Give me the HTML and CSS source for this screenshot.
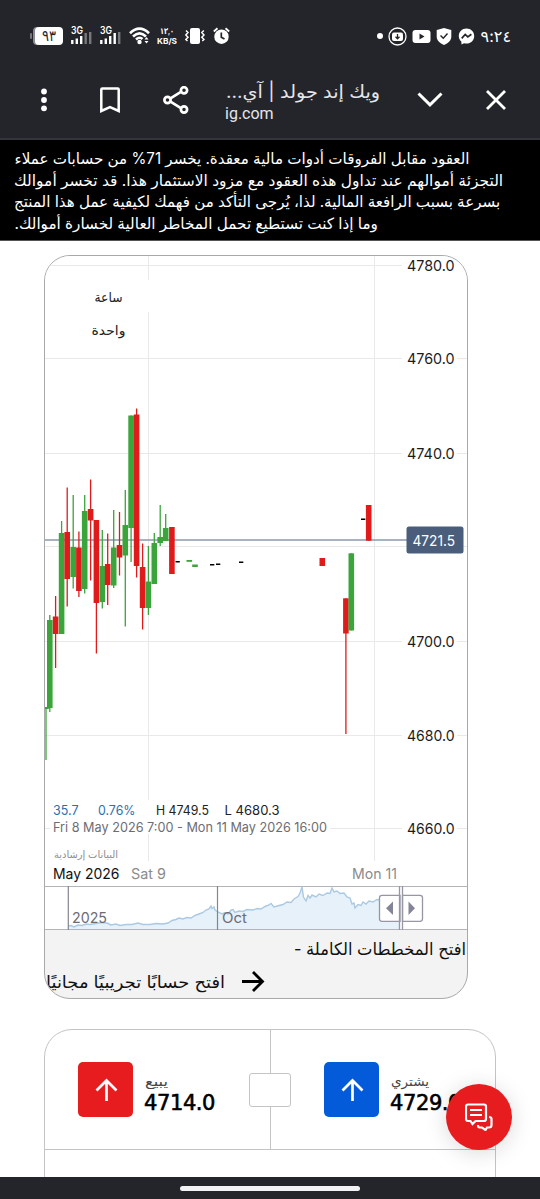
FILE: index.html
```
<!DOCTYPE html>
<html lang="ar">

<head>
    <meta charset="UTF-8">
    <meta name="viewport" content="width=device-width, initial-scale=1.0">
    <title>ويك إند جولد | آي جي</title>
    <link rel="stylesheet" href="styles.css">
</head>

<body>
    <header>
        <div class="status">
            <div class="status-left">
                <svg class="battery" width="34" height="18" viewBox="0 0 34 18">
                    <rect x="0" y="6" width="2" height="6" rx="1" fill="#77787c" />
                    <rect x="3" y="0" width="12" height="18" rx="4" fill="#8b8c90" />
                    <rect x="5" y="0" width="28" height="18" rx="4" fill="#fff" />
                    <text x="19" y="14" text-anchor="middle" textLength="14" lengthAdjust="spacingAndGlyphs" class="battery-text">٩٣</text>
                </svg>
                <svg class="signal" width="22" height="20" viewBox="0 0 22 20">
                    <text x="0" y="8" textLength="12" lengthAdjust="spacingAndGlyphs">3G</text>
                    <path d="M1.3 14v4M5.800 12.500v5.500M10.200 10v8" stroke="#fff" />
                    <path d="M14.700 7v11M19.200 6v12" stroke="#77787c" />
                </svg>
                <svg class="signal" width="22" height="20" viewBox="0 0 22 20">
                    <text x="0" y="8" textLength="12" lengthAdjust="spacingAndGlyphs">3G</text>
                    <path d="M1.300 14v4M5.800 12.500v5.500M10.200 10v8M14.700 7v11" stroke="#fff" />
                    <path d="M19.200 6v12" stroke="#77787c" />
                </svg>
                <svg class="wifi" width="22" height="18" viewBox="0 0 22 18" fill="none" stroke="#fff" stroke-width="2.600">
                    <path d="M1 6.200Q10.500-3 20 6.200M4 9.500Q10.500 3.300 17 9.500M7 12.500Q10.500 9.300 13.500 12" />
                    <circle cx="10.500" cy="15" r="2.200" fill="#fff" stroke="none" />
                    <path d="M15.500 12.500l2-2.500 2 2.500zM15.500 14l2 2.500 2-2.500z" fill="#fff" stroke="none" />
                </svg>
                <svg class="speed" width="20" height="18" viewBox="0 0 20 18">
                    <text x="3" y="7" textLength="14" lengthAdjust="spacingAndGlyphs">١٣,٠</text>
                    <text x="0" y="16.500" class="unit" textLength="20" lengthAdjust="spacingAndGlyphs">KB/S</text>
                </svg>
                <svg class="vibrate" width="20" height="18" viewBox="0 0 20 18">
                    <rect x="5" y="1" width="10" height="16" rx="2" fill="#fff" />
                    <path d="M1 3.500l2 2-2.200 2.500L3 10.200.8 12.500 2.500 14M18.800 3.500l-2 2 2.200 2.500-2.200 2.200 2.200 2.300-1.700 1.500" fill="none" stroke="#fff" stroke-width="1.500" />
                </svg>
                <svg class="alarm" width="17" height="18" viewBox="0 0 17 18">
                    <circle cx="8.500" cy="9.700" r="7.200" fill="#fff" />
                    <path d="M.8 4.500l3.700-3.200M16.200 4.500l-3.700-3.200" stroke="#fff" stroke-width="1.800" />
                    <path d="M8.300 5.500v4.800l3.200 1.800" fill="none" stroke="#24252b" stroke-width="1.700" />
                </svg>
            </div>
            <div class="status-right">
                <i class="dot"></i>
                <svg width="19" height="19" viewBox="0 0 19 19">
                    <circle cx="9.500" cy="9.500" r="8.500" fill="none" stroke="#fff" stroke-width="1.300" />
                    <rect x="4" y="5.500" width="11" height="8.500" rx="2" fill="#fff" />
                    <path d="M9.500 7v4M7.500 9.800l2 2 2-2" fill="none" stroke="#24252b" stroke-width="1.300" />
                </svg>
                <svg width="19" height="19" viewBox="0 0 19 19">
                    <rect x="0.500" y="3" width="18" height="13" rx="3" fill="#fff" />
                    <path d="M7.500 6.500v6l5-3z" fill="#24252b" />
                </svg>
                <svg width="16" height="19" viewBox="0 0 16 19">
                    <path d="M8 1l7.300 2v6.500c0 4-3 6.500-7.300 8.500C3.700 16 .7 13.500.7 9.500V3z" fill="#fff" />
                    <path d="M4.500 8.500l2.800 2.700 4.200-4.700" fill="none" stroke="#24252b" stroke-width="1.400" />
                </svg>
                <svg class="messenger" width="17" height="19" viewBox="0 0 17 19">
                    <path d="M8.500 1.500C4 1.500.8 4.700.8 9c0 2.300 1 4.200 2.500 5.500l.2 3 2.500-1.200c.8.200 1.600.3 2.500.3 4.500 0 7.700-3.300 7.700-7.600S13 1.500 8.500 1.500z" fill="#fff" />
                    <path d="M3.700 11.300l3.500-3.800 2.600 2.400 3.600-2.600" fill="none" stroke="#24252b" stroke-width="1.700" />
                </svg>
                <span class="clock">٩:٢٤</span>
            </div>
        </div>
        <nav class="toolbar">
            <svg class="more" width="8" height="24" viewBox="0 0 8 24" fill="#fff">
                <circle cx="4" cy="3.500" r="2.900" /><circle cx="4" cy="12" r="2.900" /><circle cx="4" cy="20.300" r="2.900" />
            </svg>
            <svg class="bookmark" width="20" height="26" viewBox="0 0 20 26">
                <path d="M1.300 24V2.500q0-1 1-1h15.400q1 0 1 1V24L10 20.200z" fill="none" stroke="#fff" stroke-width="2.500" />
            </svg>
            <svg class="share" width="26" height="28" viewBox="0 0 26 28" fill="none" stroke="#fff" stroke-width="2.700">
                <path d="M7.500 12.300L17.500 6.200M7.500 15.700l10 6.200" />
                <circle cx="4.500" cy="14" r="3.100" /><circle cx="21" cy="4.300" r="3.100" /><circle cx="21" cy="23.500" r="3.100" />
            </svg>
            <div class="page-title">
                <svg width="156" height="28" viewBox="0 0 156 28">
                    <text x="155" y="19" direction="rtl" textLength="154" lengthAdjust="spacingAndGlyphs">ويك إند جولد | آي...</text>
                </svg>
                <span>ig.com</span>
            </div>
            <svg class="down" width="26" height="16" viewBox="0 0 26 16">
                <path d="M1.500 1.500L13 12.800 24.500 1.500" fill="none" stroke="#fff" stroke-width="3" />
            </svg>
            <svg class="close" width="20" height="20" viewBox="0 0 20 20">
                <path d="M1 1l18 18M19 1L1 19" stroke="#fff" stroke-width="2.800" />
            </svg>
        </nav>
    </header>

    <svg class="notice" width="540" height="101" viewBox="0 140 540 101" direction="rtl">
        <text x="471.500" y="164" textLength="459.500" lengthAdjust="spacingAndGlyphs">العقود مقابل الفروقات أدوات مالية معقدة. يخسر 71% من حسابات عملاء</text>
        <text x="505.500" y="186" textLength="494" lengthAdjust="spacingAndGlyphs">التجزئة أموالهم عند تداول هذه العقود مع مزود الاستثمار هذا. قد تخسر أموالك</text>
        <text x="502.500" y="208" textLength="491" lengthAdjust="spacingAndGlyphs">بسرعة بسبب الرافعة المالية. لذا، يُرجى التأكد من فهمك لكيفية عمل هذا المنتج</text>
        <text x="379" y="230" textLength="367" lengthAdjust="spacingAndGlyphs">وما إذا كنت تستطيع تحمل المخاطر العالية لخسارة أموالك.</text>
    </svg>

    <main>
        <section class="chart-card">
            <svg class="chart" width="422" height="674" viewBox="45 256 422 674">
                <g class="grid">
                    <path d="M45 265.500H402M45 358.500H402M457 358.500h10M45 453.500H402M457 453.500h10M45 546.500H467M45 641.500H402M457 641.500h10M45 735.500H402M457 735.500h10M45 828.500h5M330 828.500h72M457 828.500h10" />
                    <path d="M148.500 256v24M148.500 312v488M148.500 834v27M374.500 256v605" />
                </g>
                <path d="M45 540H407" stroke="#8c99ab" stroke-width="1.300" />
                <g id="candles"></g>
                <g class="interval" direction="rtl">
                    <text x="122.500" y="302" textLength="28" lengthAdjust="spacingAndGlyphs">ساعة</text>
                    <text x="125.500" y="334.500" textLength="34" lengthAdjust="spacingAndGlyphs">واحدة</text>
                </g>
                <g class="axis" id="axis"></g>
                <rect x="406.500" y="526.500" width="57" height="27" rx="2.500" fill="#4a5e7c" />
                <text x="412.500" y="545.500" class="tag" textLength="42.500" lengthAdjust="spacingAndGlyphs">4721.5</text>
                <g class="info">
                    <text x="53" y="815" class="up" textLength="25.500" lengthAdjust="spacingAndGlyphs">35.7</text>
                    <text x="98" y="815" class="up" textLength="37.500" lengthAdjust="spacingAndGlyphs">0.76%</text>
                    <text x="156" y="815" textLength="53" lengthAdjust="spacingAndGlyphs">H 4749.5</text>
                    <text x="224.500" y="815" textLength="55" lengthAdjust="spacingAndGlyphs">L 4680.3</text>
                    <text x="53" y="831.500" class="range" textLength="274" lengthAdjust="spacingAndGlyphs">Fri 8 May 2026 7:00 - Mon 11 May 2026 16:00</text>
                    <text x="118" y="858" class="hint" direction="rtl" textLength="64" lengthAdjust="spacingAndGlyphs">البيانات إرشادية</text>
                </g>
                <g class="dates">
                    <text x="53" y="879" class="month" textLength="66.500" lengthAdjust="spacingAndGlyphs">May 2026</text>
                    <text x="131" y="879" textLength="35" lengthAdjust="spacingAndGlyphs">Sat 9</text>
                    <text x="352" y="879" textLength="45" lengthAdjust="spacingAndGlyphs">Mon 11</text>
                </g>
                <g class="navigator">
                    <polygon id="area" fill="#e6f1fa" />
                    <polyline id="line" fill="none" stroke="#abc9e2" stroke-width="1.400" />
                    <path d="M45 886.500h422M45 929.500h422" stroke="#b4b4bc" />
                    <path d="M68.300 886v44M217.500 886v44" stroke="#85858f" stroke-width="1.200" />
                    <text x="72" y="923" textLength="35" lengthAdjust="spacingAndGlyphs">2025</text>
                    <text x="222" y="923" textLength="25" lengthAdjust="spacingAndGlyphs">Oct</text>
                    <g fill="#fff" stroke="#9696a4" stroke-width="1.300">
                        <path d="M400 895.300h-18q-2.500 0-2.500 2.500v21q0 2.500 2.500 2.500h18zM402.500 895.300h17.500q2.500 0 2.500 2.500v21q0 2.500-2.500 2.500h-17.500z" />
                        <path d="M399.500 886v44M402.500 886v44" />
                    </g>
                    <path d="M393 901.500v13.500l-7-6.800zM408.500 901.500v13.500l6.500-6.800z" fill="#85859a" />
                </g>
            </svg>
            <div class="links">
                <a href="javascript:;" class="full">
                    <svg width="174" height="30" viewBox="0 0 174 30">
                        <text x="173" y="19.500" direction="rtl" textLength="172" lengthAdjust="spacingAndGlyphs">افتح المخططات الكاملة -</text>
                    </svg>
                </a>
                <a href="javascript:;" class="demo">
                    <svg width="180" height="34" viewBox="0 0 180 34">
                        <text x="180" y="22.500" direction="rtl" textLength="179" lengthAdjust="spacingAndGlyphs">افتح حسابًا تجريبيًا مجانيًا</text>
                    </svg>
                    <svg width="24" height="22" viewBox="0 0 24 22">
                        <path d="M1 10.500h20M12 1l9.500 9.500-9.500 9.500" fill="none" stroke="#000" stroke-width="2.800" />
                    </svg>
                </a>
            </div>
        </section>

        <section class="deal-card">
            <div class="deal">
                <a href="javascript:;" class="arrow sell">
                    <svg width="24" height="24" viewBox="0 0 24 24"><path d="M12.500 23V2.500M2.500 12.500L12.500 2.500l10 10" /></svg>
                </a>
                <div class="price">
                    <svg width="26" height="22" viewBox="0 0 26 22"><text x="24" y="14" direction="rtl" textLength="23" lengthAdjust="spacingAndGlyphs">يبيع</text></svg>
                    <strong>4714.0</strong>
                </div>
            </div>
            <div class="deal">
                <a href="javascript:;" class="arrow buy">
                    <svg width="24" height="24" viewBox="0 0 24 24"><path d="M12.500 23V2.500M2.500 12.500L12.500 2.500l10 10" /></svg>
                </a>
                <div class="price">
                    <svg width="42" height="22" viewBox="0 0 42 22"><text x="39" y="14" direction="rtl" textLength="38" lengthAdjust="spacingAndGlyphs">يشتري</text></svg>
                    <strong>4729.0</strong>
                </div>
            </div>
            <span class="spread"></span>
        </section>
    </main>

    <a href="javascript:;" class="chat">
        <svg width="28" height="28" viewBox="0 0 28 28" fill="none" stroke="#fff" stroke-width="2.200">
            <path d="M3 1.500h16q2 0 2 2V16q0 2-2 2h-8.500L7.500 21l-2-3H3q-2 0-2-2V3.500q0-2 2-2zM5 7h12M5 12h12" />
            <path d="M24 14q2.500 0 2.500 2v6q0 2.500-2.500 2.500h-2L20.500 27 17 24.500h-2.500q-1.500 0-1.500-2.500" />
        </svg>
    </a>
    <footer><span></span></footer>

    <script>
        // x, body top, body bottom, high, low, type
        const candles = [
            [46, 707, 709, 707, 760, 'g'],
            [49.8, 620, 708, 615, 712, 'g'],
            [55.6, 616.5, 634, 596, 668, 'r'],
            [61.6, 533, 634, 521, 634, 'g'],
            [67.2, 532, 579, 487.5, 606.5, 'r'],
            [73.2, 547, 577, 495, 588.5, 'g'],
            [78.9, 547.5, 591, 531.5, 597, 'r'],
            [84.7, 511, 589, 495, 593.5, 'g'],
            [90.6, 509, 520.5, 479.5, 580.5, 'r'],
            [96.4, 520, 603, 520, 653.5, 'r'],
            [102.3, 566, 602, 530, 608.5, 'g'],
            [107.7, 564, 585, 533.5, 605, 'r'],
            [113.7, 547.5, 585.5, 510, 588, 'g'],
            [119.5, 545, 557.5, 512, 575.5, 'r'],
            [125.3, 525, 555.5, 490, 626.5, 'g'],
            [131.1, 415.5, 528, 415.5, 562, 'g'],
            [136.6, 414.5, 566, 408.5, 577.5, 'r'],
            [142.6, 567, 608, 543.5, 629.5, 'r'],
            [148.4, 581.5, 608, 546, 615, 'g'],
            [154.3, 543, 584, 533, 584, 'g'],
            [160.2, 537, 543, 505, 546, 'g'],
            [165.7, 528, 541, 514, 541, 'g'],
            [171.9, 527, 574, 527, 574, 'r'],
            [189.3, 560, 561.8, 560, 561, 'g'],
            [195, 564.5, 567, 565, 566, 'g'],
            [322.3, 558, 566, 558, 566, 'r'],
            [345.9, 598.3, 633.5, 598.3, 734, 'r'],
            [351.3, 553.3, 630.5, 553.3, 630.5, 'g'],
            [368.7, 505, 540.7, 505, 540.7, 'r']
        ]
        const flats = [[175.5, 561], [210, 564], [216, 563.5], [239, 561.5], [361, 518.5]]
        document.getElementById('candles').innerHTML = candles.map(([x, top, bottom, high, low, type]) => {
            return `<g class="${type}"><rect x="${x - 2.8}" y="${top}" width="5.6" height="${bottom - top}"/><rect x="${x - 0.65}" y="${high}" width="1.3" height="${low - high}"/></g>`
        }).join('') + flats.map(([x, y]) => `<rect x="${x}" y="${y}" width="4.3" height="1.5"/>`).join('')

        const prices = [[4780, 271], [4760, 364], [4740, 459], [4700, 647], [4680, 740.5], [4660, 834]]
        document.getElementById('axis').innerHTML = prices.map(([price, y]) => {
            return `<text x="407" y="${y}" textLength="47.5" lengthAdjust="spacingAndGlyphs">${price.toFixed(1)}</text>`
        }).join('')

        const history = '68,926 71,925.5 74,927 78,925 82,925.5 86,924 90,924.5 96,923.5 102,922.5 107,923 111,925 116,924 120,925.5 126,924.5 132,924.5 138,923 143,924.5 150,924.5 156,923.5 163,924 168,923 172,920.5 176,919.5 179,918 183,919 187,917.5 191,918 195,915.5 199,914 203,912.5 206,910 209,909 211,906 212,908.5 214,907 215,910 218,912 222,914 225,912.5 228,914 231,910 233,909.5 235,912.5 239,911 243,911.5 247,909.5 253,910 257,908.5 261,909 265,906.5 269,905 271,903.5 274,907 279,905.5 283,904.5 287,902 291,902.5 294,899 298,896.5 300,893 302,887 303.5,897 306,901 308,895.5 310,898 312,895 316,897 319,894 323,895.5 327,893 330,893.5 332,888 334,892 337,891 340,893.5 344,893 347,897 350,898 352,904 354,903 355,908 358,904.5 361,905.5 363,902 366,904 369,901 373,902 377,899.5 381,900'
        document.getElementById('line').setAttribute('points', history)
        document.getElementById('area').setAttribute('points', `68,930 ${history} 400,901 400,930`)
    </script>
</body>

</html>
```
FILE: styles.css
```
* {
    margin: 0;
    padding: 0;
    box-sizing: border-box;
    text-decoration: none;
}

body {
    position: relative;
    width: 540px;
    height: 1199px;
    overflow: hidden;
    display: flex;
    flex-direction: column;
    background-color: #fff;
    font-family: Inter, "DejaVu Sans", sans-serif;
}

svg {
    display: block;
    flex: none;
}

text {
    font-family: Inter, "DejaVu Sans", sans-serif;
}

header {
    height: 140px;
    flex: none;
    background-color: #24252b;
    border-bottom: 2px solid #34353a;
    color: #fff;
}

.status {
    display: flex;
    justify-content: space-between;
    height: 72px;
    padding: 26px 29px 0 30px;
}

.status-left,
.status-right {
    display: flex;
    align-items: center;
    height: 20px;
}

.battery-text {
    font-size: 15px;
    fill: #24252b;
}

.signal {
    margin-left: 7px;
    stroke-width: 2.400;
}

.signal text {
    font-size: 10px;
    font-weight: 600;
    fill: #fff;
}

.signal + .wifi {
    margin-left: 7px;
}

.speed {
    margin-left: 6px;
}

.speed text {
    font-size: 8.500px;
    font-weight: 600;
    fill: #fff;
}

.speed .unit {
    font-size: 8px;
    font-weight: 700;
}

.vibrate {
    margin-left: 8px;
}

.alarm {
    margin-left: 8px;
}

.status-right {
    gap: 5px;
}

.dot {
    width: 6px;
    height: 6px;
    border-radius: 50%;
    background-color: #fff;
}

.messenger {
    margin-left: 1px;
}

.clock {
    margin-left: 1px;
    font-size: 16px;
    direction: ltr;
}

.toolbar {
    display: flex;
    align-items: center;
    height: 56px;
    padding-left: 40px;
}

.bookmark {
    margin-left: 52px;
}

.share {
    margin-left: 43px;
}

.page-title {
    width: 156px;
    margin-left: 36px;
    display: flex;
    flex-direction: column;
    color: #e6e6ea;
    font-family: Roboto, sans-serif;
    font-size: 16px;
    line-height: 14px;
}

.page-title text {
    font-size: 18px;
    fill: #e6e6ea;
}

.down {
    margin-left: 36px;
}

.close {
    margin-left: 43px;
}

.notice {
    background-color: #000;
    border-bottom: 1px solid #555;
}

.notice text {
    font-size: 15.500px;
    fill: #fff;
}

main {
    flex: 1;
    padding: 14px 44px 0;
}

.chart-card {
    width: 424px;
    height: 744px;
    border: 1px solid #a9a9ac;
    border-radius: 26px;
    overflow: hidden;
    background-color: #f3f3f3;
}

.chart {
    background-color: #fff;
}

.grid {
    fill: none;
    stroke: #e9e9e9;
}

.g {
    fill: #3ba53b;
}

.r {
    fill: #e01b1b;
}

.interval text {
    font-size: 13px;
    fill: #222;
}

.axis text,
.tag {
    font-size: 15px;
    fill: #1b1b1b;
}

text.tag {
    fill: #fff;
}

.info text {
    font-size: 13px;
    fill: #222;
}

.info .up {
    fill: #2c6fae;
}

.info .range {
    fill: #6c6c74;
}

.info .hint {
    font-size: 10px;
    fill: #8c8c90;
}

.dates text,
.navigator text {
    font-size: 14.500px;
    fill: #8b8b8b;
}

.dates .month {
    fill: #111;
}

.navigator text {
    fill: #6c6c76;
}

.links {
    display: flex;
    flex-direction: column;
}

.links text {
    font-size: 17px;
    fill: #111;
}

.full {
    align-self: flex-end;
    height: 35px;
    padding-top: 5px;
}

.demo {
    display: flex;
    align-items: center;
    gap: 16px;
    height: 34px;
}

.deal-card {
    position: relative;
    display: grid;
    grid-template-columns: 1fr 1fr;
    grid-template-rows: 120px;
    width: 452px;
    height: 200px;
    margin-top: 30px;
    border: 1px solid #c4c4c6;
    border-radius: 28px;
}

.deal {
    display: flex;
    padding: 32px 0 0 33px;
    border-bottom: 1px solid #c4c4c6;
}

.deal + .deal {
    padding-left: 53px;
    border-left: 1px solid #c4c4c6;
}

.arrow {
    width: 55px;
    height: 55px;
    flex: none;
    display: flex;
    align-items: center;
    justify-content: center;
    border-radius: 5px;
}

.arrow path {
    fill: none;
    stroke: #fff;
    stroke-width: 2.700;
}

.sell {
    background-color: #e61c1f;
}

.buy {
    background-color: #045bda;
}

.price {
    display: flex;
    flex-direction: column;
    padding: 10px 0 0 11px;
}

.price text {
    font-size: 13px;
    fill: #444;
}

.price strong {
    font-family: "DejaVu Sans", sans-serif;
    font-size: 21px;
    font-weight: 400;
    line-height: 18px;
    letter-spacing: -0.400px;
    -webkit-text-stroke: 0.600px #000;
}

.spread {
    position: absolute;
    left: 204px;
    top: 43px;
    width: 42px;
    height: 34px;
    background-color: #fff;
    border: 1px solid #c4c4c6;
    border-radius: 3px;
}

.chat {
    position: absolute;
    left: 446px;
    top: 1084px;
    width: 66px;
    height: 66px;
    display: flex;
    align-items: center;
    justify-content: center;
    border-radius: 50%;
    background-color: #e61c1f;
    box-shadow: 0 3px 22px rgba(0, 0, 0, 0.150);
}

footer {
    position: absolute;
    left: 0;
    bottom: 0;
    width: 540px;
    height: 22px;
    display: flex;
    justify-content: center;
    padding-top: 9px;
    background-color: #24252b;
}

footer span {
    width: 180px;
    height: 5px;
    border-radius: 3px;
    background-color: #f2f2f4;
}
```
